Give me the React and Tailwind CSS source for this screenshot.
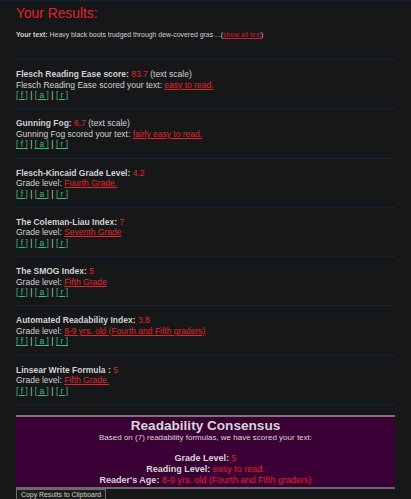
import React from "react";

const sections = [
  { title: "Flesch Reading Ease score:", value: "83.7", extra: " (text scale)", label: "Flesch Reading Ease scored your text: ", link: "easy to read." },
  { title: "Gunning Fog:", value: "6.7", extra: " (text scale)", label: "Gunning Fog scored your text: ", link: "fairly easy to read." },
  { title: "Flesch-Kincaid Grade Level:", value: "4.2", extra: "", label: "Grade level: ", link: "Fourth Grade." },
  { title: "The Coleman-Liau Index:", value: "7", extra: "", label: "Grade level: ", link: "Seventh Grade" },
  { title: "The SMOG Index:", value: "5", extra: "", label: "Grade level: ", link: "Fifth Grade" },
  { title: "Automated Readability Index:", value: "3.8", extra: "", label: "Grade level: ", link: "8-9 yrs. old (Fourth and Fifth graders)" },
  { title: "Linsear Write Formula :", value: "5", extra: "", label: "Grade level: ", link: "Fifth Grade." },
];

function Links() {
  return (
    <div className="text-[#c8c8c8] whitespace-pre">
      <a className="text-[#3dba7c] underline">[ f ]</a> | <a className="text-[#3dba7c] underline">[ a ]</a> | <a className="text-[#3dba7c] underline">[ r ]</a>
    </div>
  );
}

export default function App() {
  return (
    <div className="min-h-[499px] bg-[#161718] border-t border-[#142638] text-[#d2d2d2]" style={{ fontFamily: '"Liberation Sans", Arial, sans-serif' }}>
      <div className="w-[379px] ml-[16px]">
        <h1 className="text-[#e2252b] text-[13.8px] leading-[16px] pt-[5px]">Your Results:</h1>
        <div className="text-[6.9px] leading-[9px] mt-[8px] mb-[20px] h-[9px] whitespace-nowrap">
          <b>Your text:</b> Heavy black boots trudged through dew-covered gras ...(<a className="text-[#cf2029] underline">show all text</a>)
        </div>
        <div className="border-t border-[#132536]" />
        {sections.map((s, i) => (
          <div key={i} className="text-[8.5px] leading-[10.5px] pt-[9px] h-[49.3px] border-b border-[#132536] whitespace-nowrap">
            <div>
              <b>{s.title}</b> <span className="text-[#e2252b]">{s.value}</span>{s.extra}
            </div>
            <div>
              {s.label}
              <a className="text-[#e2252b] underline">{s.link}</a>
            </div>
            <Links />
          </div>
        ))}
        <div className="mt-[10px] bg-[#3a0035] border-t-2 border-b-2 border-t-[#807272] border-b-[#6d6a6b] text-center text-[#d6d6d6] pt-[1px] pb-[1px]">
          <div className="text-[13.6px] leading-[15px] font-bold">Readability Consensus</div>
          <div className="text-[8px] leading-[9px]">Based on (7) readability formulas, we have scored your text:</div>
          <div className="text-[9px] leading-[11px] mt-[11px]">
            <div><b>Grade Level:</b> <span className="text-[#e2252b]">5</span></div>
            <div><b>Reading Level:</b> <span className="text-[#e2252b]">easy to read.</span></div>
            <div><b>Reader's Age:</b> <span className="text-[#e2252b]">8-9 yrs. old (Fourth and Fifth graders)</span></div>
          </div>
        </div>
        <button className="flex items-center h-[11px] bg-[#1e1e1e] border border-[#6b6b6b] text-[6.9px] leading-[8px] px-[4px] text-[#d0d0d0] whitespace-nowrap">Copy Results to Clipboard</button>
      </div>
    </div>
  );
}
